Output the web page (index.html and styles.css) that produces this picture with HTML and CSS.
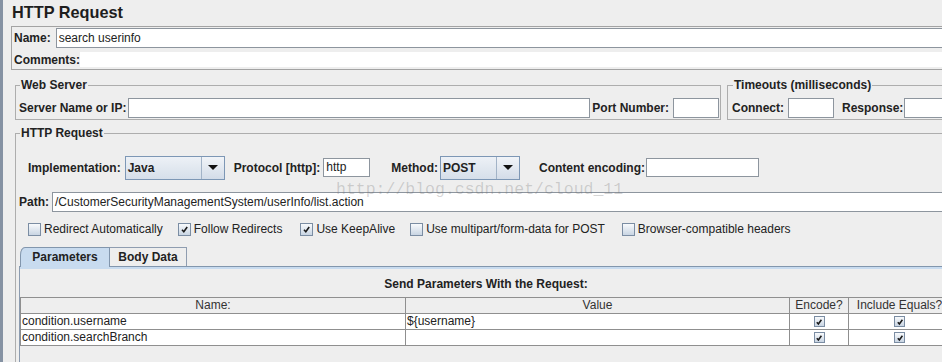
FILE: index.html
```html
<!DOCTYPE html>
<html lang="en">
<head>
    <meta charset="UTF-8">
    <title>HTTP Request</title>
    <link rel="stylesheet" href="styles.css">
</head>
<body>
<div class="app">
    <h1 class="title">HTTP Request</h1>

    <div class="namebox">
        <div class="row name-row">
            <span class="lbl">Name:</span>
            <div class="field grow">search userinfo</div>
        </div>
        <div class="row comments-row">
            <span class="lbl">Comments:</span>
            <div class="area grow"></div>
        </div>
    </div>

    <div class="server-row">
        <fieldset class="group web">
            <legend>Web Server</legend>
            <div class="row line">
                <span class="lbl server-lbl">Server Name or IP:</span>
                <div class="field grow"></div>
                <span class="lbl port-lbl">Port Number:</span>
                <div class="field port"></div>
            </div>
        </fieldset>
        <fieldset class="group timeouts">
            <legend>Timeouts (milliseconds)</legend>
            <div class="row line">
                <span class="lbl connect-lbl">Connect:</span>
                <div class="field port"></div>
                <span class="lbl resp-lbl">Response:</span>
                <div class="field grow"></div>
            </div>
        </fieldset>
    </div>

    <fieldset class="group http">
        <legend>HTTP Request</legend>

        <div class="row impl-row">
            <span class="lbl">Implementation:</span>
            <div class="combo impl">
                <span class="val">Java</span>
                <span class="btn"><span class="arrow"></span></span>
            </div>
            <span class="lbl proto-lbl">Protocol [http]:</span>
            <div class="field small proto">http</div>
            <span class="lbl method-lbl">Method:</span>
            <div class="combo method">
                <span class="val">POST</span>
                <span class="btn"><span class="arrow"></span></span>
            </div>
            <span class="lbl enc-lbl">Content encoding:</span>
            <div class="field small enc"></div>
        </div>

        <div class="row path-row">
            <span class="lbl">Path:</span>
            <div class="field grow">/CustomerSecurityManagementSystem/userInfo/list.action</div>
        </div>

        <div class="row checks">
            <label class="check"><span class="cb"></span>Redirect Automatically</label>
            <label class="check"><span class="cb"><svg width="9" height="9" viewBox="0 0 9 9"><path d="M2 4.8 L3.8 6.8 L7.2 2" fill="none" stroke="#1a1a1a" stroke-width="1.6"/></svg></span>Follow Redirects</label>
            <label class="check keep"><span class="cb"><svg width="9" height="9" viewBox="0 0 9 9"><path d="M2 4.8 L3.8 6.8 L7.2 2" fill="none" stroke="#1a1a1a" stroke-width="1.6"/></svg></span>Use KeepAlive</label>
            <label class="check"><span class="cb"></span>Use multipart/form-data for POST</label>
            <label class="check browser"><span class="cb"></span>Browser-compatible headers</label>
        </div>

        <div class="tabs">
            <div class="tab active">Parameters</div>
            <div class="tab">Body Data</div>
        </div>
        <div class="panel">
            <div class="caption">Send Parameters With the Request:</div>
            <table class="params">
                <colgroup>
                    <col class="c-name"><col class="c-value"><col class="c-enc"><col class="c-eq">
                </colgroup>
                <tr class="head">
                    <td>Name:</td><td>Value</td><td>Encode?</td><td>Include Equals?</td>
                </tr>
                <tr>
                    <td>condition.username</td><td>${username}</td>
                    <td class="mid"><span class="cb tiny"><svg width="8" height="8" viewBox="0 0 9 9"><path d="M2 4.8 L3.8 6.8 L7.2 2" fill="none" stroke="#1a1a1a" stroke-width="1.7"/></svg></span></td>
                    <td class="mid"><span class="cb tiny"><svg width="8" height="8" viewBox="0 0 9 9"><path d="M2 4.8 L3.8 6.8 L7.2 2" fill="none" stroke="#1a1a1a" stroke-width="1.7"/></svg></span></td>
                </tr>
                <tr>
                    <td>condition.searchBranch</td><td></td>
                    <td class="mid"><span class="cb tiny"><svg width="8" height="8" viewBox="0 0 9 9"><path d="M2 4.8 L3.8 6.8 L7.2 2" fill="none" stroke="#1a1a1a" stroke-width="1.7"/></svg></span></td>
                    <td class="mid"><span class="cb tiny"><svg width="8" height="8" viewBox="0 0 9 9"><path d="M2 4.8 L3.8 6.8 L7.2 2" fill="none" stroke="#1a1a1a" stroke-width="1.7"/></svg></span></td>
                </tr>
            </table>
        </div>
    </fieldset>
</div>

<div class="watermark">http://blog.csdn.net/cloud_11</div>
</body>
</html>
```

FILE: styles.css
```css
body {
    margin: 0;
    width: 942px;
    height: 362px;
    overflow: hidden;
    position: relative;
    background: #eeeeee;
    color: #222;
    font: 12px "Liberation Sans", Arial, sans-serif;
}

.app {
    height: 362px;
    box-sizing: border-box;
    overflow: hidden;
    border-left: 3px solid #8592a3;
    padding-left: 8px;
}

.title {
    margin: 0 0 0 1px;
    padding-top: 1px;
    font-size: 16.3px;
    line-height: 22px;
    font-weight: bold;
    color: #1e1e1e;
}

.row {
    display: flex;
    align-items: center;
}
.lbl {
    font-weight: bold;
    white-space: nowrap;
}
.grow { flex: 1; }

.field {
    height: 20px;
    box-sizing: border-box;
    border: 1px solid #8d959e;
    background: #fff;
    padding: 0 2px;
    line-height: 18px;
    white-space: nowrap;
    overflow: hidden;
}
.field.small { height: 19px; line-height: 17px; }

/* name / comments */
.namebox {
    margin-top: 3px;
    margin-right: -20px;
    border: 1px solid #a3a3a3;
    padding: 1px 0 0 2px;
}
.name-row { height: 20px; margin-bottom: 2px; }
.name-row .lbl { margin-right: 5px; }
.comments-row { height: 19px; }
.area { height: 15px; background: #fff; }

/* fieldsets */
.group {
    margin: 0;
    min-width: 0;
    border: 1px solid #adadad;
    padding: 5px 1px 1px 3px;
}
legend {
    font-weight: bold;
    line-height: 14px;
    padding: 0 1px;
    margin-left: 1px;
}
.line { height: 21px; }

.server-row {
    display: flex;
    margin: 8px -20px 0 4px;
}
.web { width: 706px; box-sizing: border-box; flex: none; }
.timeouts { flex: 1; margin-left: 6px; padding-left: 4px; }
.server-lbl { margin-right: 2px; }
.port-lbl { margin: 0 4px 0 2px; }
.port { width: 46px; }
.connect-lbl { margin-right: 4px; }
.resp-lbl { margin: 0 1px 0 8px; }

.http {
    margin: 6px -10px 0 4px;
    padding: 0 0 0 3px;
    border-right: none;
    border-bottom: none;
    height: 260px;
}

/* implementation row */
.impl-row { margin-top: 15px; height: 25px; padding-left: 9px; }
.impl-row .lbl { margin-right: 4px; }
.combo {
    display: flex;
    height: 24px;
    box-sizing: border-box;
    border: 1px solid #7d97b5;
    background: linear-gradient(#edf1f6, #d6dfea);
}
.combo .val {
    flex: 1;
    font-weight: bold;
    padding-left: 2px;
    line-height: 22px;
}
.combo .btn {
    width: 22px;
    border-left: 1px solid #a2b3c7;
    display: flex;
    align-items: center;
    justify-content: center;
    background: linear-gradient(#f1f4f8, #d3dce8);
}
.arrow {
    width: 0;
    height: 0;
    border-left: 5px solid transparent;
    border-right: 5px solid transparent;
    border-top: 5px solid #111;
}
.impl { width: 100px; }
.method { width: 80px; }
.impl-row .proto-lbl { margin: 0 3px 0 9px; }
.proto { width: 47px; }
.impl-row .method-lbl { margin: 0 2px 0 21px; }
.impl-row .enc-lbl { margin: 0 1px 0 19px; }
.enc { width: 113px; }

/* path */
.path-row { margin-top: 12px; height: 20px; }
.path-row .lbl { margin-right: 3px; }

/* checkboxes */
.checks { margin-top: 9px; height: 16px; padding-left: 9px; gap: 15px; }
.check { display: flex; align-items: center; white-space: nowrap; }
.check.keep { margin-left: 3px; }
.check.browser { margin-left: 2px; }
.cb {
    width: 13px;
    height: 13px;
    box-sizing: border-box;
    border: 1px solid #7b8da3;
    background: linear-gradient(#f8fafc, #c9d5e3);
    display: inline-flex;
    align-items: center;
    justify-content: center;
    margin-right: 3px;
}
.cb.tiny { width: 11px; height: 11px; margin: 0; }

/* tabs */
.tabs {
    display: flex;
    margin: 10px 0 0 1px;
    height: 19px;
}
.tab {
    height: 19px;
    box-sizing: border-box;
    border: 1px solid #8f9db0;
    border-bottom: none;
    font-weight: bold;
    line-height: 18px;
    text-align: center;
    white-space: nowrap;
    background: #eeeeee;
}
.tab.active {
    width: 90px;
    background: #c8dbef;
    border-color: #8296ad;
    border-top-left-radius: 5px 8px;
    position: relative;
    z-index: 1;
    margin-bottom: -1px;
    height: 20px;
}
.tab + .tab { width: 77px; border-left: none; }

.panel {
    border-top: 1px solid #8296ad;
    border-left: 1px solid #8b9bb0;
    box-shadow: inset 0 2px 0 #c8dbef;
    padding-top: 10px;
    height: 120px;
}
.caption {
    font-weight: bold;
    text-align: center;
    line-height: 14px;
}

/* table */
.params {
    margin-top: 6px;
    table-layout: fixed;
    border-collapse: collapse;
    width: 931px;
    background: #fff;
}
.params td {
    border: 1px solid #8f8f8f;
    height: 15px;
    line-height: 15px;
    padding: 0 1px;
    white-space: nowrap;
    overflow: hidden;
}
.params .head td {
    background: #eeeeee;
    text-align: center;
    color: #333;
}
.params td.mid { text-align: center; }
.params td.mid .cb { vertical-align: middle; }
.c-name { width: 385px; }
.c-value { width: 384px; }
.c-enc { width: 59px; }

.watermark {
    position: absolute;
    left: 336px;
    top: 181px;
    font: 16.5px/18px "Liberation Mono", monospace;
    color: rgba(110, 110, 110, 0.28);
    pointer-events: none;
}
```
